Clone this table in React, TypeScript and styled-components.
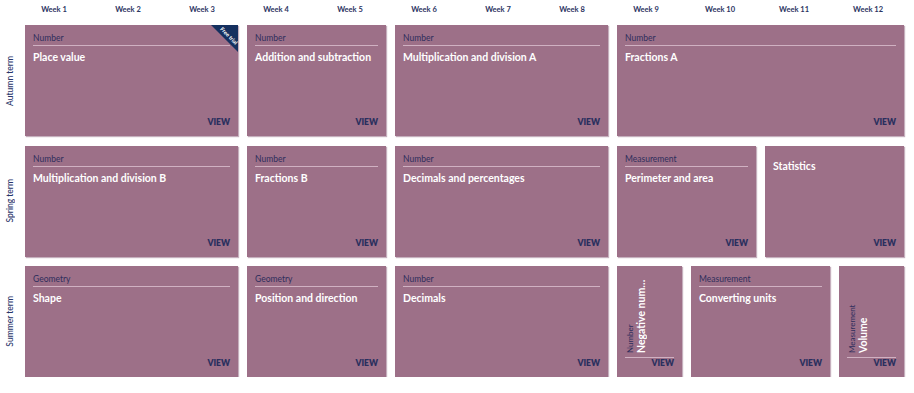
import React from "react";
import styled, { createGlobalStyle } from "styled-components";

interface iBlock {
  category?: string;
  title: string;
  span: number;
  trial?: boolean;
}

interface iTerm {
  name: string;
  blocks: iBlock[];
}

const weeks = Array.from({ length: 12 }, (_, i) => `Week ${i + 1}`);

const terms: iTerm[] = [
  {
    name: "Autumn term",
    blocks: [
      { category: "Number", title: "Place value", span: 3, trial: true },
      { category: "Number", title: "Addition and subtraction", span: 2 },
      { category: "Number", title: "Multiplication and division A", span: 3 },
      { category: "Number", title: "Fractions A", span: 4 },
    ],
  },
  {
    name: "Spring term",
    blocks: [
      { category: "Number", title: "Multiplication and division B", span: 3 },
      { category: "Number", title: "Fractions B", span: 2 },
      { category: "Number", title: "Decimals and percentages", span: 3 },
      { category: "Measurement", title: "Perimeter and area", span: 2 },
      { title: "Statistics", span: 2 },
    ],
  },
  {
    name: "Summer term",
    blocks: [
      { category: "Geometry", title: "Shape", span: 3 },
      { category: "Geometry", title: "Position and direction", span: 2 },
      { category: "Number", title: "Decimals", span: 3 },
      { category: "Number", title: "Negative numbers", span: 1 },
      { category: "Measurement", title: "Converting units", span: 2 },
      { category: "Measurement", title: "Volume", span: 1 },
    ],
  },
];

const Card: React.FC<iBlock> = ({ category, title, span, trial }) => {
  if (span === 1) {
    return (
      <Tile span={span}>
        <VerticalArea>
          <VerticalText>
            <Category>{category}</Category>
            <VerticalTitle>{title}</VerticalTitle>
          </VerticalText>
        </VerticalArea>
        <Footer divided>
          <View>VIEW</View>
        </Footer>
      </Tile>
    );
  }
  return (
    <Tile span={span}>
      {category && <CategoryRow>{category}</CategoryRow>}
      <Title bare={!category}>{title}</Title>
      <Footer>
        <View>VIEW</View>
      </Footer>
      {trial && (
        <>
          <Ribbon />
          <RibbonText>Free trial</RibbonText>
        </>
      )}
    </Tile>
  );
};

const App: React.FC = () => {
  return (
    <>
      <GlobalStyle />
      <Page>
        <Header>
          <Spacer />
          <Grid>
            {weeks.map((w) => (
              <Week key={w}>{w}</Week>
            ))}
          </Grid>
        </Header>
        <Terms>
          {terms.map((t) => (
            <TermRow key={t.name}>
              <TermLabel>
                <TermText>{t.name}</TermText>
              </TermLabel>
              <Grid>
                {t.blocks.map((b) => (
                  <Card key={b.title} {...b} />
                ))}
              </Grid>
            </TermRow>
          ))}
        </Terms>
      </Page>
    </>
  );
};

export default App;

const GlobalStyle = createGlobalStyle`
  body {
    margin: 0;
    background: #ffffff;
    font-family: Lato, "Open Sans", Arial, sans-serif;
    color: #2a3160;
  }
`;

const Page = styled.div`
  width: 914px;
`;

const Header = styled.div`
  display: flex;
  height: 25px;
`;

const Spacer = styled.div`
  width: 25px;
  flex-shrink: 0;
`;

const Grid = styled.div`
  display: grid;
  grid-template-columns: repeat(12, 65px);
  column-gap: 9px;
  flex: 1;
`;

const Week = styled.div`
  padding: 5px 7px 0 0;
  text-align: center;
  font-size: 7.5px;
  line-height: 10px;
  font-weight: 700;
  color: #2b3462;
`;

const Terms = styled.div`
  display: flex;
  flex-direction: column;
  gap: 9.5px;
`;

const TermRow = styled.div`
  display: flex;
  height: 111px;
`;

const TermLabel = styled.div`
  width: 25px;
  flex-shrink: 0;
  display: flex;
  align-items: center;
  justify-content: center;
  padding-right: 5px;
  box-sizing: border-box;
`;

const TermText = styled.div`
  writing-mode: vertical-rl;
  transform: rotate(180deg);
  font-size: 8.5px;
  font-weight: 500;
  color: #28346a;
  white-space: nowrap;
`;

const Tile = styled.div<{ span: number }>`
  grid-column: span ${({ span }) => span};
  position: relative;
  overflow: hidden;
  display: flex;
  flex-direction: column;
  padding: 8px;
  box-sizing: border-box;
  background: #9d7088;
  box-shadow: 1px 1px 1px rgba(150, 110, 135, 0.55);
`;

const CategoryRow = styled.div`
  font-size: 8.5px;
  line-height: 11px;
  padding-bottom: 1px;
  color: #2f2e5c;
  border-bottom: 1px solid rgba(230, 205, 220, 0.7);
`;

const Title = styled.div<{ bare?: boolean }>`
  margin-top: ${({ bare }) => (bare ? "6px" : "5px")};
  font-size: 10.5px;
  line-height: 13px;
  font-weight: 700;
  color: #ffffff;
`;

const Footer = styled.div<{ divided?: boolean }>`
  margin-top: auto;
  display: flex;
  justify-content: flex-end;
  border-top: ${({ divided }) => (divided ? "1px solid rgba(230, 205, 220, 0.7)" : "none")};
`;

const View = styled.span`
  font-size: 8.5px;
  line-height: 11px;
  font-weight: 800;
  color: #2b2f5e;
`;

const VerticalArea = styled.div`
  flex: 1;
  min-height: 0;
  display: flex;
  overflow: hidden;
  padding-bottom: 4px;
`;

const VerticalText = styled.div`
  writing-mode: vertical-rl;
  transform: rotate(180deg);
  max-height: 100%;
  overflow: hidden;
`;

const Category = styled.div`
  font-size: 8px;
  line-height: 10px;
  color: #2f2e5c;
  white-space: nowrap;
`;

const VerticalTitle = styled.div`
  font-size: 10.5px;
  line-height: 13px;
  font-weight: 700;
  color: #ffffff;
  white-space: nowrap;
  overflow: hidden;
  text-overflow: ellipsis;
`;

const Ribbon = styled.div`
  position: absolute;
  top: 0;
  right: 0;
  width: 0;
  height: 0;
  border-top: 27px solid #15305f;
  border-left: 27px solid transparent;
`;

const RibbonText = styled.span`
  position: absolute;
  top: 6.5px;
  right: 0;
  width: 20px;
  text-align: center;
  transform: rotate(45deg);
  font-size: 5.5px;
  line-height: 7px;
  font-weight: 700;
  color: #ffffff;
  white-space: nowrap;
`;
